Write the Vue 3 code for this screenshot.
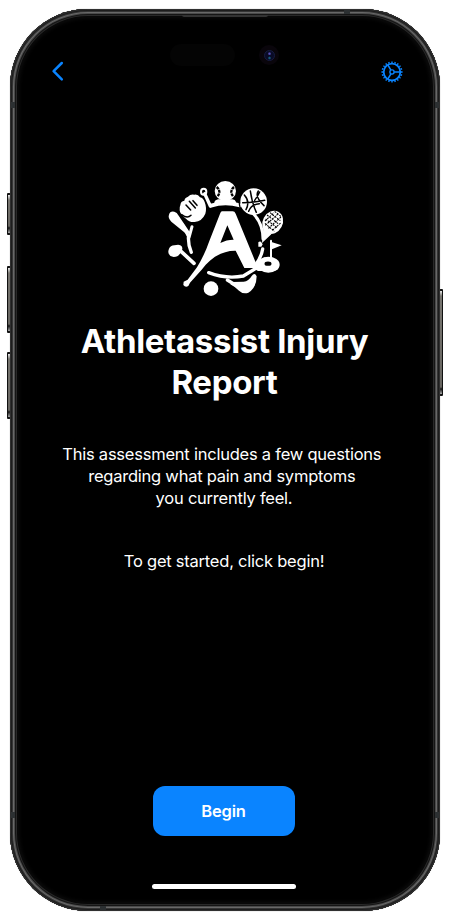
<script setup>
import { ref } from 'vue'

const title = ['Athletassist Injury', 'Report']
const started = ref(false)
const teeth = Array.from({ length: 20 }, (_, i) => i * 18)
</script>

<template>
  <main class="stage">
    <i class="side action"></i>
    <i class="side volume-up"></i>
    <i class="side volume-down"></i>
    <i class="side power"></i>
    <section class="phone">
      <i class="speaker"></i>
      <i class="seam top"></i>
      <i class="seam bottom"></i>
      <i class="seam left upper"></i>
      <i class="seam left lower"></i>
      <i class="seam right upper"></i>
      <i class="seam right lower"></i>
      <div class="island"></div>
      <div class="camera"><i></i></div>

      <header class="nav">
        <button class="icon-button" aria-label="Back">
          <svg width="14" height="22" viewBox="0 0 14 22">
            <path d="M10.8 2 2.6 10.1l8.2 8.2" fill="none" stroke="#0a84ff" stroke-width="2.5" stroke-linecap="round" stroke-linejoin="round" />
          </svg>
        </button>
        <button class="icon-button" aria-label="Settings">
          <svg width="22" height="22" viewBox="-11 -11 22 22">
            <g fill="none" stroke="#0a84ff">
              <circle r="8.3" stroke-width="1.8" />
              <path v-for="a in teeth" :key="a" d="M9 0h1.6" stroke-width="1.4" :transform="`rotate(${a})`" />
              <circle r="2.1" stroke-width="1.4" />
              <path d="M2.2 0H8M-1.1-1.9-4.2-7.2M-1.1 1.9-4.2 7.2" stroke-width="1.6" />
            </g>
          </svg>
        </button>
      </header>

      <svg class="logo" viewBox="0 0 390 375" aria-label="Athletassist">
        <g fill="none" stroke="#fff" stroke-linecap="round" stroke-linejoin="round">
          <path d="M153 92Q194 78 240 91" stroke-width="12" />
          <path d="M280 116Q309 146 309 192" stroke-width="9" />
          <path d="M308 222Q303 249 287 269" stroke-width="10" />
          <path d="M146 293Q199 313 250 303L286 281" stroke-width="10" />
          <path d="M85 188Q85 211 94 232" stroke-width="10" />
          <path d="M96 155 87 188 68 150" stroke-width="9" />
          <path d="M151 93 134 56" stroke-width="10" />
          <ellipse cx="131" cy="50" rx="8" ry="9" stroke-width="6" />
          <path d="M63 229 102 265" stroke-width="11" />
          <path d="M202 315 238 337" stroke-width="10" />
          <path d="M333 197V248" stroke-width="6" />
        </g>
        <g fill="#fff">
          <path fill-rule="evenodd" d="M186 109h32q6 0 9 7l67 163h-41l-26-52c-40-1-76 22-102 57l-35 39-5 10q-9 5-15-3l1-10 12-6 28-37Q134 239 148 198l33-84q2-5 5-5ZM202 151 181 204Q199 194 221 194Z" />
          <path d="M27 119q3-12 16-9 8 2 13 12l33 49-7 8L34 140q-11-12-7-21Z" />
          <path d="M27 221q4-9 16-10 17-5 22 3 5 8-2 17-6 15-22 15-22-4-14-25Z" />
          <path d="M61 91q1-13 12-14 1-9 11-12 8-9 19-6 11-2 17 8 10 2 14 14 7 18 2 35-10 23-32 25-15 2-26-10-18-12-19-25-1-10 2-15Z" />
          <ellipse cx="196" cy="48" rx="32" ry="30" />
          <path d="M174 73h43q9 1 11 8 1 9-11 9h-41q-14-1-13-9 2-6 11-8Z" />
          <circle cx="281" cy="80" r="40" />
          <ellipse cx="338" cy="142" rx="30" ry="36" transform="rotate(28 338 142)" />
          <path d="M310 160 306 204 334 178ZM295 202q3-4 8-2l5 8-4 7h-9Z" />
          <path d="M332 200 365 211 332 224Z" />
          <ellipse cx="325" cy="269" rx="34" ry="24" />
          <path d="M280 272 315 247 329 288 294 288 281 281Z" />
          <circle cx="153" cy="341" r="22" />
          <path d="m216 321 35-1q15-1 24-17 9-12 15 1 0 34-25 49-15 6-28-6-11-11-26-19Z" />
        </g>
        <g fill="none" stroke="#000" stroke-width="5" stroke-linecap="round">
          <path d="M78 90 92 105M88 79l18 20M99 77l12 14M65 119q17 13 28 2" stroke-width="4.5" />
          <path d="M170 36q15 13 2 29M222 36q-15 13-2 29" stroke-width="7" stroke-dasharray="9 2" stroke-linecap="butt" />
          <g stroke-width="4.5">
            <path d="M248 83Q280 83 314 76M271 48Q276 84 289 112M253 60Q271 80 258 104M295 48Q283 65 312 92M284 76Q294 62 299 51M266 109Q273 88 298 86" />
          </g>
          <path d="m317 132 34 26M321 120l36 28M330 113l31 24M344 109l20 16M315 145l28 24M316 151l40-36M315 138l27-25M325 160l39-35M337 166l25-22" stroke-width="3.2" stroke-dasharray="6 3" stroke-linecap="butt" />
          <ellipse cx="324" cy="266" rx="8" ry="4" fill="#000" />
          <path d="M238 78Q237 98 247 108" stroke-width="4" />
        </g>
      </svg>

      <h1><span v-for="line in title" :key="line">{{ line }}</span></h1>
      <p class="intro">This assessment includes a few questions&nbsp;<br>regarding what pain and symptoms&nbsp;<br>you currently feel.</p>
      <p class="prompt">To get started, click begin!</p>
      <button class="begin" @click="started = true">Begin</button>
      <div class="home"></div>
    </section>
  </main>
</template>

<style>
body { background: #fff; }
</style>

<style scoped>
* { box-sizing: border-box; }
.stage {
  position: relative;
  width: 450px;
  height: 920px;
  padding: 9px 10px;
  overflow: hidden;
  font-family: Inter, "Liberation Sans", sans-serif;
}
.phone {
  position: relative;
  display: flex;
  flex-direction: column;
  align-items: center;
  width: 430px;
  height: 902px;
  border-radius: 78px;
  background: #000;
  color: #fff;
  box-shadow:
    0 0 1px #777,
    inset 0 0 0 1px #303030,
    inset 0 0 0 2px #1d1d1d,
    inset 0 0 0 3px #343434,
    inset 0 0 0 4px #686868,
    inset 0 0 0 5px #4a4a4a,
    inset 0 0 0 6px #151515,
    inset 0 0 0 7px #292929,
    inset 0 0 0 8px #080808,
    inset 0 0 5px 8px #141414;
}
.side {
  position: absolute;
  left: 7px;
  width: 4px;
  border: solid #111;
  border-width: 2px 1px;
  border-radius: 1px 0 0 1px;
  background: linear-gradient(#eee 0, #77756f 5px, #66645f calc(100% - 7px), #111 calc(100% - 5px), #aaa 100%);
}
.action { top: 193px; height: 42px; }
.volume-up { top: 266px; height: 67px; }
.volume-down { top: 352px; height: 67px; }
.power { top: 289px; left: 439px; height: 107px; border-radius: 0 1px 1px 0; }
.speaker {
  position: absolute;
  left: 172px;
  top: 6px;
  width: 86px;
  height: 2px;
  border-radius: 0 0 2px 2px;
  background: #333;
}
.seam { position: absolute; background: #2c3032; }
.seam.top { left: 334px; top: 1px; width: 6px; height: 4px; }
.seam.bottom { left: 90px; bottom: 1px; width: 6px; height: 4px; }
.seam.left, .seam.right { width: 4px; height: 6px; }
.seam.left { left: 1px; }
.seam.right { right: 1px; }
.seam.upper { top: 93px; }
.seam.lower { bottom: 93px; }
.island {
  position: absolute;
  top: 35px;
  left: 160px;
  width: 65px;
  height: 22px;
  border-radius: 11px;
  background: #040404;
}
.camera {
  position: absolute;
  top: 36px;
  left: 249px;
  display: grid;
  place-items: center;
  width: 20px;
  height: 20px;
  border-radius: 50%;
  background: #09050b;
}
.camera i {
  width: 11px;
  height: 11px;
  border: 1px solid #171c40;
  border-radius: 50%;
  background:
    radial-gradient(circle at 50% 30%, #5a52bd 0 0.6px, transparent 1.8px),
    radial-gradient(circle at 50% 78%, #125a7c 0 0.6px, transparent 1.8px),
    #090b26;
}
.nav {
  display: flex;
  justify-content: space-between;
  align-items: center;
  width: 352px;
  height: 22px;
  margin: 52px 0 0 3px;
}
button { border: 0; padding: 0; font: inherit; }
.icon-button { display: flex; background: none; }
.logo { width: 130px; height: 125px; margin-top: 92px; }
h1 {
  display: flex;
  flex-direction: column;
  align-items: center;
  margin: 21px 1px 0 0;
  font-size: 33px;
  font-weight: 700;
  line-height: 41px;
  letter-spacing: -0.33px;
  white-space: nowrap;
}
p {
  margin: 0 2px 0 0;
  font-size: 16.5px;
  line-height: 22px;
  letter-spacing: -0.23px;
  text-align: center;
  white-space: nowrap;
}
.intro { margin-top: 40px; }
.prompt { margin-top: 41px; }
.begin {
  flex: none;
  width: 142px;
  height: 50px;
  margin: 214px 2px 0 0;
  padding-right: 1px;
  border-radius: 12px;
  background: #0a84ff;
  color: #fff;
  font-size: 16.5px;
  font-weight: 600;
  letter-spacing: -0.2px;
}
.home {
  flex: none;
  width: 144px;
  height: 5px;
  margin: 48px 2px 0 0;
  border-radius: 3px;
  background: #fff;
}
</style>
